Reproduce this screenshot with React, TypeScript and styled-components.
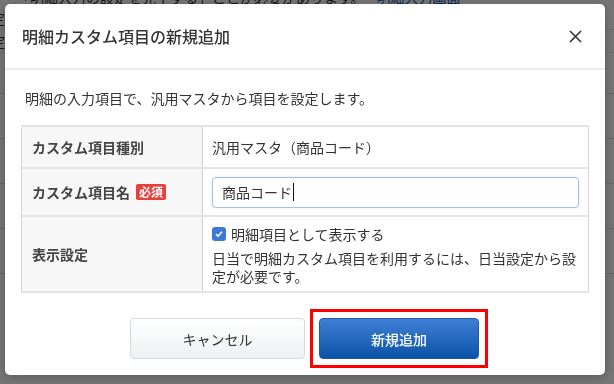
import React from 'react';
import styled, { createGlobalStyle } from 'styled-components';

const GlobalStyle = createGlobalStyle`
  html, body {
    margin: 0;
    padding: 0;
  }
  body {
    font-family: "Noto Sans CJK JP", "Noto Sans", sans-serif;
    color: #333;
    background: #fff;
  }
  * { box-sizing: border-box; }
`;

// page behind the dialog (only the edges peek out)
const Page = styled.div`
  height: 384px;
  overflow: hidden;
  background: #fff;
`;

const Notice = styled.p`
  margin: -13px 0 0 16px;
  font-size: 14px;
  line-height: 20px;
  color: #333;
  white-space: nowrap;

  a {
    color: #1f5fb8;
    margin-left: 12px;
  }
`;

const PageRow = styled.div`
  height: 23px;
  margin-left: -9px;
  font-size: 14px;
  line-height: 23px;
  border-bottom: 1px solid #e9e9e9;
`;

const PageGrid = styled.div`
  margin-top: 40px;
  border-top: 1px solid #ddd;

  div {
    height: 45px;
    border-bottom: 1px solid #ddd;
  }
`;

const Backdrop = styled.div`
  position: fixed;
  inset: 0;
  background: rgba(0, 0, 0, 0.54);
  padding: 4px 0 0 5px;
`;

const Dialog = styled.div`
  width: 600px;
  background: #fff;
  border-radius: 5px;
  box-shadow: 0 2px 10px rgba(0, 0, 0, 0.25);
`;

const Header = styled.div`
  display: flex;
  align-items: center;
  justify-content: space-between;
  padding: 20px 20px 20px 17px;
  border-bottom: 2px solid #ececec;
`;

const Title = styled.h2`
  margin: 0;
  font-size: 16px;
  line-height: 24px;
  font-weight: 500;
  color: #333;
`;

const CloseButton = styled.button`
  display: flex;
  align-items: center;
  justify-content: center;
  width: 20px;
  height: 20px;
  padding: 0;
  border: none;
  background: none;
  cursor: pointer;
`;

const Body = styled.div`
  padding: 18px 16px 0;
`;

const Lead = styled.p`
  margin: 0 0 17px 4px;
  font-size: 14px;
  line-height: 20px;
  color: #333;
`;

const Table = styled.table`
  width: 100%;
  border-collapse: collapse;
  border: 1px solid #d6d6d6;
  font-size: 14px;

  tr + tr {
    border-top: 2px solid #e4e4e4;
  }
  tr:first-child {
    border-top: 2px solid #e4e4e4;
  }
  tr:last-child {
    border-bottom: 2px solid #e4e4e4;
  }
`;

const Label = styled.th<{ $h: number }>`
  width: 181px;
  height: ${p => p.$h}px;
  padding: 0 10px;
  background: #f7f7f7;
  border-right: 1px solid #d0d0d0;
  text-align: left;
  font-weight: 700;
  color: #444;
  line-height: 20px;
  white-space: nowrap;
`;

const Cell = styled.td`
  padding: 0 9px;
  line-height: 20px;
  color: #333;
`;

const Required = styled.span`
  display: inline-block;
  margin-left: 6px;
  padding: 0 3px;
  background: #e6403c;
  color: #fff;
  font-size: 12px;
  line-height: 16px;
  font-weight: 700;
  border-radius: 2px;
  vertical-align: 1px;
`;

const Field = styled.div`
  display: flex;
  align-items: center;
  height: 31px;
  padding: 0 9px;
  border: 1px solid #a4c1e6;
  border-radius: 4px;
  box-shadow: 0 0 2px rgba(80, 140, 220, 0.25);
  background: #fff;
  color: #333;
`;

const Caret = styled.span`
  width: 1px;
  height: 18px;
  margin-left: 1px;
  background: #111;
`;

const CheckRow = styled.label`
  display: flex;
  align-items: center;
  gap: 5px;
  margin-bottom: 5px;
`;

const Checkbox = styled.span`
  display: flex;
  align-items: center;
  justify-content: center;
  width: 14px;
  height: 14px;
  border-radius: 3px;
  background: #3a7ad6;
`;

const Note = styled.p`
  margin: 0;
  line-height: 18px;
`;

const Footer = styled.div`
  display: flex;
  justify-content: center;
  align-items: center;
  gap: 5px;
  padding: 16px 0 7px 8px;
`;

// red annotation frame drawn round the primary button in the screenshot
const Highlight = styled.span`
  display: flex;
  padding: 6px;
  border: 3px solid #ff0000;
`;

const Button = styled.button<{ $primary?: boolean }>`
  width: ${p => (p.$primary ? 160 : 175)}px;
  height: 41px;
  border-radius: 4px;
  font-family: inherit;
  font-size: 14px;
  cursor: pointer;
  border: 1px solid ${p => (p.$primary ? '#1a5cab' : '#d6d9de')};
  background: ${p =>
    p.$primary
      ? 'linear-gradient(#3f80d7, #0b52a6)'
      : 'linear-gradient(#ffffff, #eef0f3)'};
  color: ${p => (p.$primary ? '#fff' : '#333')};
  font-weight: ${p => (p.$primary ? 500 : 400)};
`;

function App() {
  return (
    <>
      <GlobalStyle />
      <Page>
        <Notice>
          「明細入力の設定を完了する」ことが必要があります。<a>明細入力画面</a>
        </Notice>
        <PageRow>定</PageRow>
        <PageRow>定</PageRow>
        <PageGrid>
          <div />
          <div />
          <div />
          <div />
        </PageGrid>
      </Page>
      <Backdrop>
        <Dialog>
          <Header>
            <Title>明細カスタム項目の新規追加</Title>
            <CloseButton aria-label="閉じる">
              <svg width="13" height="13" viewBox="0 0 13 13">
                <path d="M1 1L12 12M12 1L1 12" stroke="#333" strokeWidth="1.6" />
              </svg>
            </CloseButton>
          </Header>
          <Body>
            <Lead>明細の入力項目で、汎用マスタから項目を設定します。</Lead>
            <Table>
              <tbody>
                <tr>
                  <Label $h={42}>カスタム項目種別</Label>
                  <Cell>汎用マスタ（商品コード）</Cell>
                </tr>
                <tr>
                  <Label $h={48}>
                    カスタム項目名<Required>必須</Required>
                  </Label>
                  <Cell>
                    <Field>
                      商品コード<Caret />
                    </Field>
                  </Cell>
                </tr>
                <tr>
                  <Label $h={76}>表示設定</Label>
                  <Cell>
                    <CheckRow>
                      <Checkbox>
                        <svg width="10" height="10" viewBox="0 0 10 10">
                          <path d="M2 5.2L4.1 7.2L8 2.8" stroke="#fff" strokeWidth="1.6" fill="none" />
                        </svg>
                      </Checkbox>
                      明細項目として表示する
                    </CheckRow>
                    <Note>日当で明細カスタム項目を利用するには、日当設定から設定が必要です。</Note>
                  </Cell>
                </tr>
              </tbody>
            </Table>
          </Body>
          <Footer>
            <Button>キャンセル</Button>
            <Highlight>
              <Button $primary>新規追加</Button>
            </Highlight>
          </Footer>
        </Dialog>
      </Backdrop>
    </>
  );
}

export default App;
